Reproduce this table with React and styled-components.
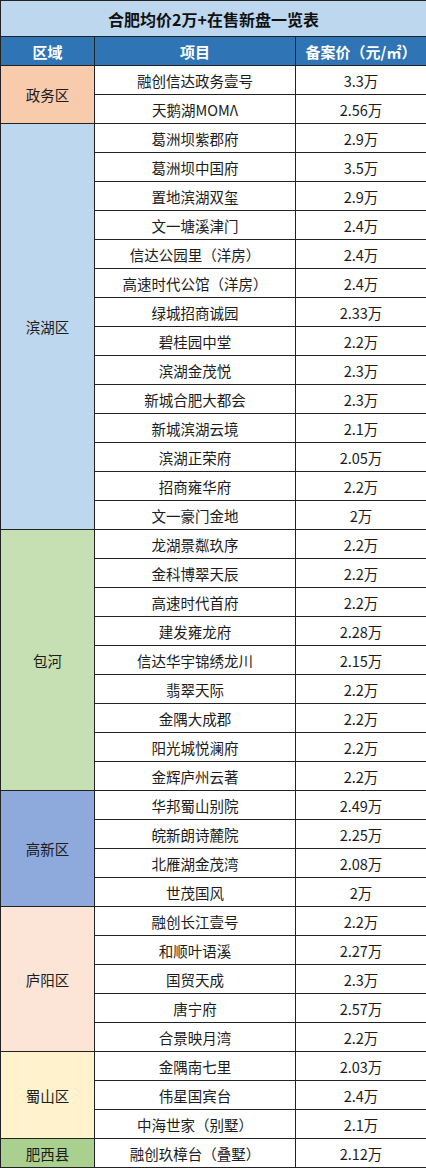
import React from "react";
import styled, { createGlobalStyle } from "styled-components";

const GlobalStyle = createGlobalStyle`
  html, body {
    margin: 0;
    padding: 0;
    background: #fff;
  }
  body {
    font-family: "Noto Sans CJK SC", "Noto Sans", "Liberation Sans", sans-serif;
  }
`;

const districts = [
  {
    name: "政务区",
    color: "#f8cbad",
    rows: [
      ["融创信达政务壹号", "3.3万"],
      ["天鹅湖MOMΛ", "2.56万"]
    ]
  },
  {
    name: "滨湖区",
    color: "#bdd7ee",
    rows: [
      ["葛洲坝紫郡府", "2.9万"],
      ["葛洲坝中国府", "3.5万"],
      ["置地滨湖双玺", "2.9万"],
      ["文一塘溪津门", "2.4万"],
      ["信达公园里（洋房）", "2.4万"],
      ["高速时代公馆（洋房）", "2.4万"],
      ["绿城招商诚园", "2.33万"],
      ["碧桂园中堂", "2.2万"],
      ["滨湖金茂悦", "2.3万"],
      ["新城合肥大都会", "2.3万"],
      ["新城滨湖云境", "2.1万"],
      ["滨湖正荣府", "2.05万"],
      ["招商雍华府", "2.2万"],
      ["文一豪门金地", "2万"]
    ]
  },
  {
    name: "包河",
    color: "#c6e0b4",
    rows: [
      ["龙湖景粼玖序", "2.2万"],
      ["金科博翠天辰", "2.2万"],
      ["高速时代首府", "2.2万"],
      ["建发雍龙府", "2.28万"],
      ["信达华宇锦绣龙川", "2.15万"],
      ["翡翠天际", "2.2万"],
      ["金隅大成郡", "2.2万"],
      ["阳光城悦澜府", "2.2万"],
      ["金辉庐州云著", "2.2万"]
    ]
  },
  {
    name: "高新区",
    color: "#8ea9db",
    rows: [
      ["华邦蜀山别院", "2.49万"],
      ["皖新朗诗麓院", "2.25万"],
      ["北雁湖金茂湾", "2.08万"],
      ["世茂国风", "2万"]
    ]
  },
  {
    name: "庐阳区",
    color: "#fce4d6",
    rows: [
      ["融创长江壹号", "2.2万"],
      ["和顺叶语溪", "2.27万"],
      ["国贸天成", "2.3万"],
      ["唐宁府", "2.57万"],
      ["合景映月湾", "2.2万"]
    ]
  },
  {
    name: "蜀山区",
    color: "#fff2cc",
    rows: [
      ["金隅南七里", "2.03万"],
      ["伟星国宾台", "2.4万"],
      ["中海世家（别墅）", "2.1万"]
    ]
  },
  {
    name: "肥西县",
    color: "#a9d08e",
    rows: [["融创玖樟台（叠墅）", "2.12万"]]
  }
];

const Table = styled.table`
  width: 426px;
  border-collapse: collapse;
  table-layout: fixed;
  color: #1c1c1c;
  font-size: 14.5px;
`;

const TitleCell = styled.th`
  height: 35px;
  padding: 0;
  background: #bdd7ee;
  border: 1px solid #222;
  font-size: 16px;
  font-weight: 700;
  color: #111;
  text-align: center;
`;

const HeadCell = styled.th`
  height: 28px;
  padding: 0;
  background: #2f75b5;
  border: 1px solid #222;
  color: #fff;
  font-size: 15px;
  font-weight: 700;
  text-align: center;
`;

const Cell = styled.td`
  height: 28px;
  padding: 0;
  border: 1px solid #222;
  background: ${(p) => p.$bg || "#fff"};
  text-align: center;
  white-space: nowrap;
`;

export default function App() {
  return (
    <>
      <GlobalStyle />
      <Table>
        <colgroup>
          <col style={{ width: 94 }} />
          <col style={{ width: 201 }} />
          <col style={{ width: 131 }} />
        </colgroup>
        <thead>
          <tr>
            <TitleCell colSpan={3}>合肥均价2万+在售新盘一览表</TitleCell>
          </tr>
          <tr>
            <HeadCell>区域</HeadCell>
            <HeadCell>项目</HeadCell>
            <HeadCell>
              备案价（元/㎡）
            </HeadCell>
          </tr>
        </thead>
        <tbody>
          {districts.map((d) =>
            d.rows.map(([project, price], i) => (
              <tr key={d.name + project}>
                {i === 0 && (
                  <Cell rowSpan={d.rows.length} $bg={d.color}>
                    {d.name}
                  </Cell>
                )}
                <Cell>{project}</Cell>
                <Cell>{price}</Cell>
              </tr>
            ))
          )}
        </tbody>
      </Table>
    </>
  );
}
